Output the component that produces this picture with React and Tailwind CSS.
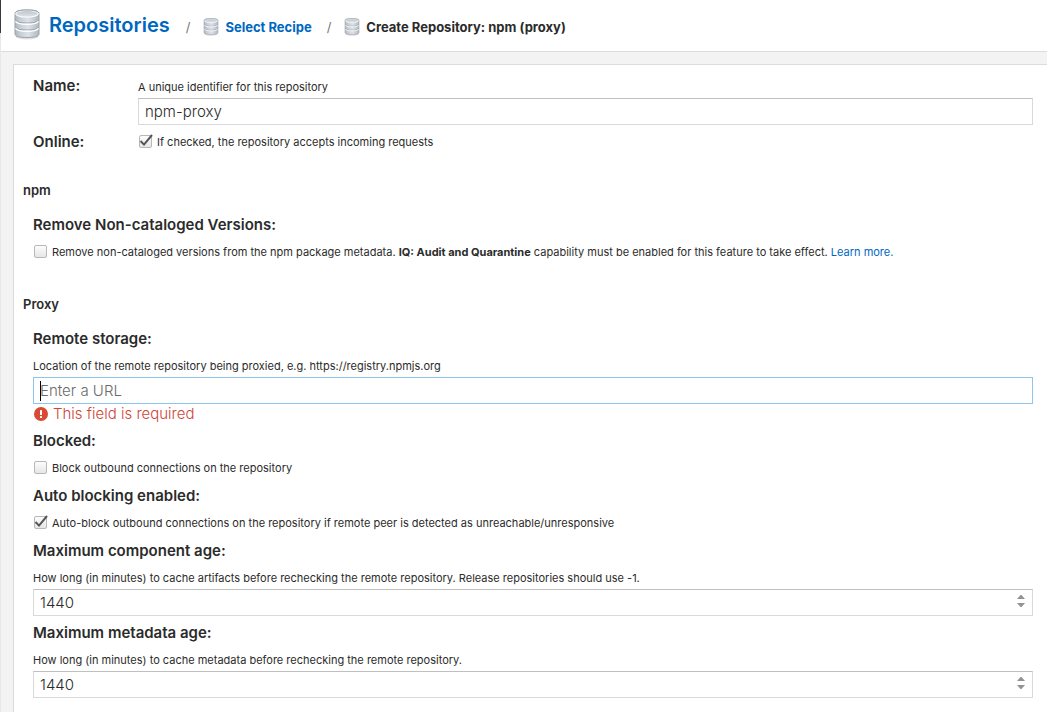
import React, { useState } from "react";
import clsx from "clsx";

const DatabaseIcon = ({ className }) => (
  <svg viewBox="0 0 26 31" className={className} aria-hidden="true">
    <defs>
      <linearGradient id="dbBody" x1="0" x2="1" y1="0" y2="0">
        <stop offset="0" stopColor="#adb5bd" />
        <stop offset="0.2" stopColor="#c6cdd5" />
        <stop offset="0.55" stopColor="#dde2e8" />
        <stop offset="1" stopColor="#b0b8c0" />
      </linearGradient>
      <linearGradient id="dbTop" x1="0" x2="0" y1="0" y2="1">
        <stop offset="0" stopColor="#bcc4cb" />
        <stop offset="1" stopColor="#dfe4e8" />
      </linearGradient>
    </defs>
    <ellipse cx="13" cy="27.5" rx="11.5" ry="3" fill="#000" opacity="0.12" />
    <path
      d="M1 4.500C1 2 6 1 13 1s12 1 12 3.500v20.500c0 2.500-5 3.500-12 3.500s-12-1-12-3.500z"
      fill="url(#dbBody)"
      stroke="#9aa2aa"
    />
    <path d="M1.500 11c1 2.400 6 3 11.500 3s10.500-.6 11.500-3M1.500 18c1 2.400 6 3 11.500 3s10.500-.6 11.500-3" fill="none" stroke="#98a1aa" strokeWidth="1" />
    <path d="M1.500 12.200c1 2.400 6 3 11.500 3s10.500-.6 11.500-3M1.500 19.200c1 2.400 6 3 11.500 3s10.500-.6 11.500-3" fill="none" stroke="#fff" strokeWidth="1.400" />
    <ellipse cx="13" cy="4.800" rx="11.200" ry="3.300" fill="url(#dbTop)" stroke="#f7f9fa" strokeWidth="1.200" />
    <path d="M1.200 4C2 1.800 7 1 13 1s11 .8 11.800 3" fill="none" stroke="#9aa2aa" />
  </svg>
);

const ErrorIcon = () => (
  <svg viewBox="0 0 14 14" className="w-[14px] h-[14px]" aria-hidden="true">
    <circle cx="7" cy="7" r="7" fill="#d84a35" />
    <rect x="6" y="3" width="2" height="5" rx="0.500" fill="#fff" />
    <rect x="6" y="9" width="2" height="2" rx="0.500" fill="#fff" />
  </svg>
);

const Separator = () => <span className="text-[13px] font-normal text-[#777777]">/</span>;

const inputClass =
  "block w-full h-[27px] px-1.5 bg-white border border-[#d9d9d9] border-t-[#c0c0c0] text-[15px] leading-5 font-light rounded-none outline-none focus:border-[#8fc5ea]";

const Label = ({ htmlFor, children }) => (
  <label htmlFor={htmlFor} className="block text-[15px] leading-6 font-semibold">
    {children}
  </label>
);

const Help = ({ id, children }) => (
  <p id={id} className="text-[11px] leading-4 mb-[3px]">
    {children}
  </p>
);

const SectionTitle = ({ children }) => (
  <h2 className="text-[13px] leading-5 font-semibold">{children}</h2>
);

const Checkbox = ({ id, defaultChecked, children }) => {
  const [checked, setChecked] = useState(!!defaultChecked);

  return (
    <div className="flex items-center gap-1">
      <span className="relative flex w-[15px] h-4 items-start">
        <input
          id={id}
          type="checkbox"
          checked={checked}
          onChange={(e) => setChecked(e.target.checked)}
          className="appearance-none mt-px ml-px w-[13px] h-[13px] rounded-[2px] border border-[#b8b8b8] bg-linear-to-b from-[#fdfdfd] to-[#e6e6e6]"
        />
        {checked && (
          <svg viewBox="0 0 15 16" className="absolute inset-0 w-[15px] h-4 pointer-events-none" aria-hidden="true">
            <path d="M2.500 7l3.500 3.600L14 1" fill="none" stroke="#555" strokeWidth="2" />
          </svg>
        )}
      </span>
      <label htmlFor={id} className="text-[11px] leading-4">
        {children}
      </label>
    </div>
  );
};

const NumberField = ({ id, label, help, defaultValue }) => {
  const [value, setValue] = useState(defaultValue);

  return (
    <div>
      <Label htmlFor={id}>{label}</Label>
      <div className="mt-[7px]">
        <Help id={`${id}-help`}>{help}</Help>
        <div className="relative">
          <input
            id={id}
            type="text"
            inputMode="numeric"
            value={value}
            onChange={(e) => setValue(e.target.value)}
            aria-describedby={`${id}-help`}
            className={inputClass}
          />
          <div className="absolute right-2 top-1.5 flex flex-col gap-1">
            <button type="button" aria-label={`Increase ${label}`} onClick={() => setValue(Number(value) + 1)}>
              <svg viewBox="0 0 8 4" className="block w-2 h-1" fill="#929292">
                <path d="M0 4h8L4.500 0h-1z" />
              </svg>
            </button>
            <button type="button" aria-label={`Decrease ${label}`} onClick={() => setValue(Number(value) - 1)}>
              <svg viewBox="0 0 8 4" className="block w-2 h-1" fill="#929292">
                <path d="M0 0h8L4.500 4h-1z" />
              </svg>
            </button>
          </div>
        </div>
      </div>
    </div>
  );
};

const App = () => {
  const [name, setName] = useState("npm-proxy");
  const [remoteUrl, setRemoteUrl] = useState("");

  return (
    <div className="flex min-h-screen bg-[#f3f3f3] text-[#2b2b2b] font-[Inter,sans-serif]">
      {/* Edge of the collapsed side menu */}
      <div className="w-px shrink-0 bg-[#e8e8e8]">
        <div className="h-[33px] bg-[#3a3a3a]"></div>
      </div>

      <div className="flex-1 flex flex-col min-w-0">
        {/* Breadcrumb */}
        <header className="flex items-center h-[52px] pl-[13px] pb-0.5 bg-white border-b border-[#dcdcdc]">
          <DatabaseIcon className="w-[26px] h-[31px]" />
          <h1 className="ml-[9px] text-xl leading-6 font-semibold text-[#0067bf]">
            <a href="#repositories">Repositories</a>
          </h1>
          <nav aria-label="Breadcrumb" className="flex items-center ml-4 pt-1 text-[13px] leading-5 font-bold">
            <Separator />
            <DatabaseIcon className="w-4 h-[18px] ml-[13px] mr-1.5" />
            <a href="#recipe" className="text-[#0067bf] mr-[15px]">
              Select Recipe
            </a>
            <Separator />
            <DatabaseIcon className="w-4 h-[18px] ml-[13px] mr-1.5" />
            <span>Create Repository: npm (proxy)</span>
          </nav>
        </header>

        {/* Form panel */}
        <main className="flex-1 mt-3 ml-3 pt-[9px] pb-3.5 pl-[9px] pr-3.5 bg-white border-t border-l border-[#dcdcdc]">
          <form className="flex flex-col" onSubmit={(e) => e.preventDefault()}>
            <div className="pl-2.5 flex flex-col gap-[5px]">
              <div className="flex">
                <div className="w-[105px] shrink-0">
                  <Label htmlFor="name">Name:</Label>
                </div>
                <div className="flex-1 pt-[5px]">
                  <Help id="name-help">A unique identifier for this repository</Help>
                  <input
                    id="name"
                    type="text"
                    value={name}
                    onChange={(e) => setName(e.target.value)}
                    aria-describedby="name-help"
                    className={inputClass}
                  />
                </div>
              </div>
              <div className="flex items-center">
                <div className="w-[105px] shrink-0">
                  <Label htmlFor="online">Online:</Label>
                </div>
                <Checkbox id="online" defaultChecked>
                  If checked, the repository accepts incoming requests
                </Checkbox>
              </div>
            </div>

            <section className="mt-[26px]">
              <SectionTitle>npm</SectionTitle>
              <div className="mt-[13px] pl-2.5">
                <Label htmlFor="remove-non-cataloged">Remove Non-cataloged Versions:</Label>
                <div className="mt-[7px]">
                  <Checkbox id="remove-non-cataloged">
                    Remove non-cataloged versions from the npm package metadata. <b>IQ: Audit and Quarantine</b> capability
                    must be enabled for this feature to take effect.{" "}
                    <a href="#learn-more" className="text-[#0067bf]">
                      Learn more.
                    </a>
                  </Checkbox>
                </div>
              </div>
            </section>

            <section className="mt-[34px]">
              <SectionTitle>Proxy</SectionTitle>
              <div className="mt-[13px] pl-2.5 flex flex-col gap-[5px]">
                <div>
                  <Label htmlFor="remote-url">Remote storage:</Label>
                  <div className="mt-[7px]">
                    <Help id="remote-url-help">
                      Location of the remote repository being proxied, e.g. https://registry.npmjs.org
                    </Help>
                    <div className="relative">
                      <input
                        id="remote-url"
                        type="url"
                        placeholder="Enter a URL"
                        value={remoteUrl}
                        onChange={(e) => setRemoteUrl(e.target.value)}
                        aria-invalid={!remoteUrl}
                        aria-describedby="remote-url-help remote-url-error"
                        className={clsx(inputClass, "border-[#8fc5ea]! placeholder:text-[#6b6b6b]")}
                      />
                      {!remoteUrl && <span className="absolute left-[7px] top-1 w-px h-5 bg-black"></span>}
                    </div>
                    <p
                      id="remote-url-error"
                      className="flex items-center gap-[5px] pl-px h-5 text-[15px] leading-5 font-light text-[#cf4436]"
                    >
                      <ErrorIcon />
                      This field is required
                    </p>
                  </div>
                </div>

                <div className="mb-[3px]">
                  <Label htmlFor="blocked">Blocked:</Label>
                  <div className="mt-[7px]">
                    <Checkbox id="blocked">Block outbound connections on the repository</Checkbox>
                  </div>
                </div>

                <div className="mb-[3px]">
                  <Label htmlFor="auto-block">Auto blocking enabled:</Label>
                  <div className="mt-[7px]">
                    <Checkbox id="auto-block" defaultChecked>
                      Auto-block outbound connections on the repository if remote peer is detected as
                      unreachable/unresponsive
                    </Checkbox>
                  </div>
                </div>

                <NumberField
                  id="component-age"
                  label="Maximum component age:"
                  help="How long (in minutes) to cache artifacts before rechecking the remote repository. Release repositories should use -1."
                  defaultValue={1440}
                />
                <NumberField
                  id="metadata-age"
                  label="Maximum metadata age:"
                  help="How long (in minutes) to cache metadata before rechecking the remote repository."
                  defaultValue={1440}
                />
              </div>
            </section>
          </form>
        </main>
      </div>
    </div>
  );
};

export default App;
